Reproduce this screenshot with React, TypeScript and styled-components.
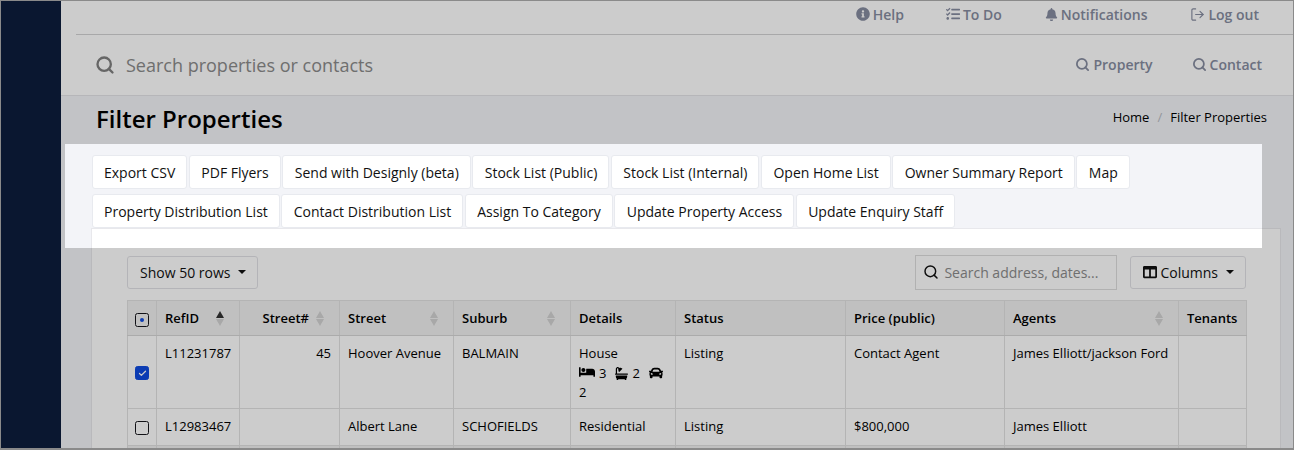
import styled, { createGlobalStyle } from "styled-components";
import { Check, LogOut, Search } from "lucide-react";
import { FaBath, FaBed, FaBell, FaCar, FaColumns, FaInfoCircle, FaTasks } from "react-icons/fa";

const GlobalStyle = createGlobalStyle`
  html, body {
    margin: 0;
    padding: 0;
    background: #f3f4f8;
  }
  body {
    font-family: "Open Sans", "Liberation Sans", sans-serif;
    font-size: 13px;
    color: #000;
  }
`;

const Frame = styled.div`
  position: relative;
  width: 1294px;
  height: 450px;
  overflow: hidden;
  display: flex;
`;

const WindowEdge = styled.div`
  position: absolute;
  inset: 0;
  border: 1px solid #8a8a8a;
  border-bottom-width: 2px;
  z-index: 3;
  pointer-events: none;
`;

const Spotlight = styled.div`
  position: absolute;
  left: 65px;
  top: 144px;
  width: 1197px;
  height: 104px;
  box-shadow: 0 0 0 2000px rgba(0, 0, 0, 0.2);
  z-index: 2;
  pointer-events: none;
`;

const Sidebar = styled.aside`
  width: 61px;
  flex: none;
  background: #0d1d3c;
`;

const Main = styled.main`
  flex: 1;
  min-width: 0;
  display: flex;
  flex-direction: column;
`;

const Header = styled.header`
  background: #fff;
  border-bottom: 1px solid #e4e4e8;
  height: 95px;
  flex: none;
`;

const TopNav = styled.nav`
  margin-left: 15px;
  height: 28px;
  border-bottom: 1px solid #d2d2d4;
  display: flex;
  justify-content: flex-end;
  align-items: center;
  gap: 43px;
  padding: 0 35px 6px 0;
`;

const NavLink = styled.a`
  display: flex;
  align-items: center;
  gap: 3px;
  font-size: 14px;
  font-weight: 600;
  color: #868ca0;
  svg {
    flex: none;
  }
`;

const HelpLink = styled(NavLink)`
  margin-right: -1px;
`;

const SearchRow = styled.div`
  height: 60px;
  display: flex;
  align-items: center;
  padding: 0 32px 0 34px;
`;

const SearchText = styled.div`
  flex: 1;
  margin-left: 11px;
  font-size: 18px;
  color: #8b8b8b;
`;

const QuickLinks = styled.div`
  display: flex;
  gap: 39px;
  padding-bottom: 2px;
`;

const PageHead = styled.div`
  height: 47px;
  flex: none;
  display: flex;
  align-items: center;
  justify-content: space-between;
  padding: 0 27px 0 35px;
`;

const Title = styled.h1`
  margin: -1px 0 0;
  font-size: 24px;
  line-height: 46px;
  font-weight: 600;
`;

const Breadcrumb = styled.div`
  display: flex;
  gap: 8px;
  font-size: 13px;
  margin-top: -6px;
  span:nth-child(2) {
    color: #b9bcc4;
  }
`;

const Content = styled.div`
  padding: 12px 13px 0 30px;
`;

const Actions = styled.div`
  display: flex;
  flex-wrap: wrap;
  column-gap: 1.5px;
  row-gap: 5px;
  padding-left: 0.5px;
`;

const ActionButton = styled.button`
  height: 34px;
  padding: 0 11px 0 11.5px;
  background: #fff;
  border: 1px solid #e8eaef;
  border-radius: 3px;
  font: 400 14px "Open Sans", sans-serif;
  color: #111;
`;

const Card = styled.section`
  background: #fff;
  border: 1px solid #e8e8ec;
  padding: 26px 34px 0 35px;
  height: 260px;
`;

const Toolbar = styled.div`
  display: flex;
  align-items: center;
  height: 34px;
  margin-bottom: 11px;
`;

const ToolButton = styled.button`
  height: 33px;
  padding: 0 11px 0 12px;
  display: flex;
  align-items: center;
  gap: 3px;
  background: #fff;
  border: 1px solid #e2e2e6;
  border-radius: 3px;
  font: 400 14px "Open Sans", sans-serif;
  color: #111;
`;

const Caret = styled.i`
  display: block;
  width: 0;
  height: 0;
  margin-left: 5px;
  border-left: 4px solid transparent;
  border-right: 4px solid transparent;
  border-top: 4px solid #111;
`;

const TableSearch = styled.div`
  width: 202px;
  height: 35px;
  box-sizing: border-box;
  margin-left: auto;
  margin-right: 13px;
  padding: 0 7px;
  display: flex;
  align-items: center;
  gap: 5px;
  border: 1px solid #dedede;
  font-size: 14px;
  color: #8b8b8b;
`;

const Table = styled.table`
  width: 1119px;
  table-layout: fixed;
  border-collapse: collapse;
`;

const Col = styled.col<{ $w: number }>`
  width: ${(p) => p.$w}px;
`;

const Th = styled.th<{ $right?: boolean }>`
  height: 35px;
  padding: 0 8px;
  box-sizing: border-box;
  background: #f1f1f1;
  border: 1px solid #e2e2e2;
  border-bottom: 1px solid #d6d6d6;
  text-align: ${(p) => (p.$right ? "right" : "left")};
  font-size: 13px;
  font-weight: 600;
  position: relative;
`;

const SortedTh = styled(Th)`
  padding-right: 30px;
`;

const Td = styled.td<{ $right?: boolean }>`
  padding: 8px 8px 5px;
  vertical-align: top;
  border: 1px solid #e2e2e2;
  text-align: ${(p) => (p.$right ? "right" : "left")};
  font-size: 13px;
  line-height: 19.5px;
`;

const CheckTd = styled.td`
  padding: 0;
  vertical-align: middle;
  text-align: center;
  border: 1px solid #e2e2e2;
`;

const CheckTh = styled(Th)`
  padding: 0;
  text-align: center;
`;

const Row = styled.tr<{ $h: number }>`
  height: ${(p) => p.$h}px;
`;

const StripeRow = styled(Row)`
  td {
    background: #f1f1f1;
  }
`;

const Box = styled.span<{ $checked?: boolean }>`
  display: inline-flex;
  align-items: center;
  justify-content: center;
  width: 12px;
  height: 12px;
  vertical-align: middle;
  border-radius: 2.5px;
  border: 1px solid ${(p) => (p.$checked ? "#0f4be0" : "#16161c")};
  background: ${(p) => (p.$checked ? "#0f4be0" : "transparent")};
  color: #fff;
`;

const Dot = styled.i`
  display: block;
  width: 4px;
  height: 4px;
  border-radius: 50%;
  background: #0f4be0;
`;

const SortIcon = styled.span<{ $active?: boolean }>`
  position: absolute;
  right: 15px;
  top: 10px;
  display: flex;
  flex-direction: column;
  gap: 1px;
  &::before,
  &::after {
    content: "";
    width: 0;
    height: 0;
    border-left: 4px solid transparent;
    border-right: 4px solid transparent;
  }
  &::before {
    border-bottom: 7px solid ${(p) => (p.$active ? "#333" : "#d2d2d2")};
  }
  &::after {
    border-top: 7px solid #d2d2d2;
  }
`;

const Specs = styled.div`
  display: block;
  svg {
    vertical-align: -2px;
    margin-right: 4px;
  }
  span {
    margin-right: 9px;
  }
`;

const columns = [29, 83, 100, 114, 117, 105, 170, 159, 174, 68];

const actionsList = [
  "Export CSV",
  "PDF Flyers",
  "Send with Designly (beta)",
  "Stock List (Public)",
  "Stock List (Internal)",
  "Open Home List",
  "Owner Summary Report",
  "Map",
  "Property Distribution List",
  "Contact Distribution List",
  "Assign To Category",
  "Update Property Access",
  "Update Enquiry Staff",
];

export default function App() {
  return (
    <Frame>
      <GlobalStyle />
      <Sidebar />
      <Main>
        <Header>
          <TopNav>
            <HelpLink>
              <FaInfoCircle size={14} /> Help
            </HelpLink>
            <NavLink>
              <FaTasks size={14} /> To Do
            </NavLink>
            <NavLink>
              <FaBell size={13} /> Notifications
            </NavLink>
            <NavLink>
              <LogOut size={15} strokeWidth={1.8} /> Log out
            </NavLink>
          </TopNav>
          <SearchRow>
            <Search size={20} color="#808080" strokeWidth={2.8} />
            <SearchText>Search properties or contacts</SearchText>
            <QuickLinks>
              <NavLink>
                <Search size={15} strokeWidth={2.8} /> Property
              </NavLink>
              <NavLink>
                <Search size={15} strokeWidth={2.8} /> Contact
              </NavLink>
            </QuickLinks>
          </SearchRow>
        </Header>
        <PageHead>
          <Title>Filter Properties</Title>
          <Breadcrumb>
            <span>Home</span>
            <span>/</span>
            <span>Filter Properties</span>
          </Breadcrumb>
        </PageHead>
        <Content>
          <Actions>
            {actionsList.map((a) => (
              <ActionButton key={a}>{a}</ActionButton>
            ))}
          </Actions>
          <Card>
            <Toolbar>
              <ToolButton>
                Show 50 rows <Caret />
              </ToolButton>
              <TableSearch>
                <Search size={16} color="#111" strokeWidth={2.2} />
                Search address, dates...
              </TableSearch>
              <ToolButton>
                <FaColumns size={14} /> Columns <Caret />
              </ToolButton>
            </Toolbar>
            <Table>
              <colgroup>
                {columns.map((w, i) => (
                  <Col key={i} $w={w} />
                ))}
              </colgroup>
              <thead>
                <tr>
                  <CheckTh>
                    <Box>
                      <Dot />
                    </Box>
                  </CheckTh>
                  <SortedTh>
                    RefID
                    <SortIcon $active />
                  </SortedTh>
                  <SortedTh $right>
                    Street#
                    <SortIcon />
                  </SortedTh>
                  <SortedTh>
                    Street
                    <SortIcon />
                  </SortedTh>
                  <SortedTh>
                    Suburb
                    <SortIcon />
                  </SortedTh>
                  <Th>Details</Th>
                  <Th>Status</Th>
                  <Th>Price (public)</Th>
                  <SortedTh>
                    Agents
                    <SortIcon />
                  </SortedTh>
                  <Th>Tenants</Th>
                </tr>
              </thead>
              <tbody>
                <Row $h={72}>
                  <CheckTd>
                    <Box $checked>
                      <Check size={9} strokeWidth={3.5} />
                    </Box>
                  </CheckTd>
                  <Td>L11231787</Td>
                  <Td $right>45</Td>
                  <Td>Hoover Avenue</Td>
                  <Td>BALMAIN</Td>
                  <Td>
                    House
                    <Specs>
                      <FaBed size={16} />
                      <span>3</span>
                      <FaBath size={13} />
                      <span>2</span>
                      <FaCar size={14} /> 2
                    </Specs>
                  </Td>
                  <Td>Listing</Td>
                  <Td>Contact Agent</Td>
                  <Td>James Elliott/jackson Ford</Td>
                  <Td />
                </Row>
                <Row $h={37}>
                  <CheckTd>
                    <Box />
                  </CheckTd>
                  <Td>L12983467</Td>
                  <Td $right />
                  <Td>Albert Lane</Td>
                  <Td>SCHOFIELDS</Td>
                  <Td>Residential</Td>
                  <Td>Listing</Td>
                  <Td>$800,000</Td>
                  <Td>James Elliott</Td>
                  <Td />
                </Row>
                <StripeRow $h={37}>
                  <CheckTd />
                  <Td />
                  <Td />
                  <Td />
                  <Td />
                  <Td />
                  <Td />
                  <Td />
                  <Td />
                  <Td />
                </StripeRow>
              </tbody>
            </Table>
          </Card>
        </Content>
      </Main>
      <Spotlight />
      <WindowEdge />
    </Frame>
  );
}
